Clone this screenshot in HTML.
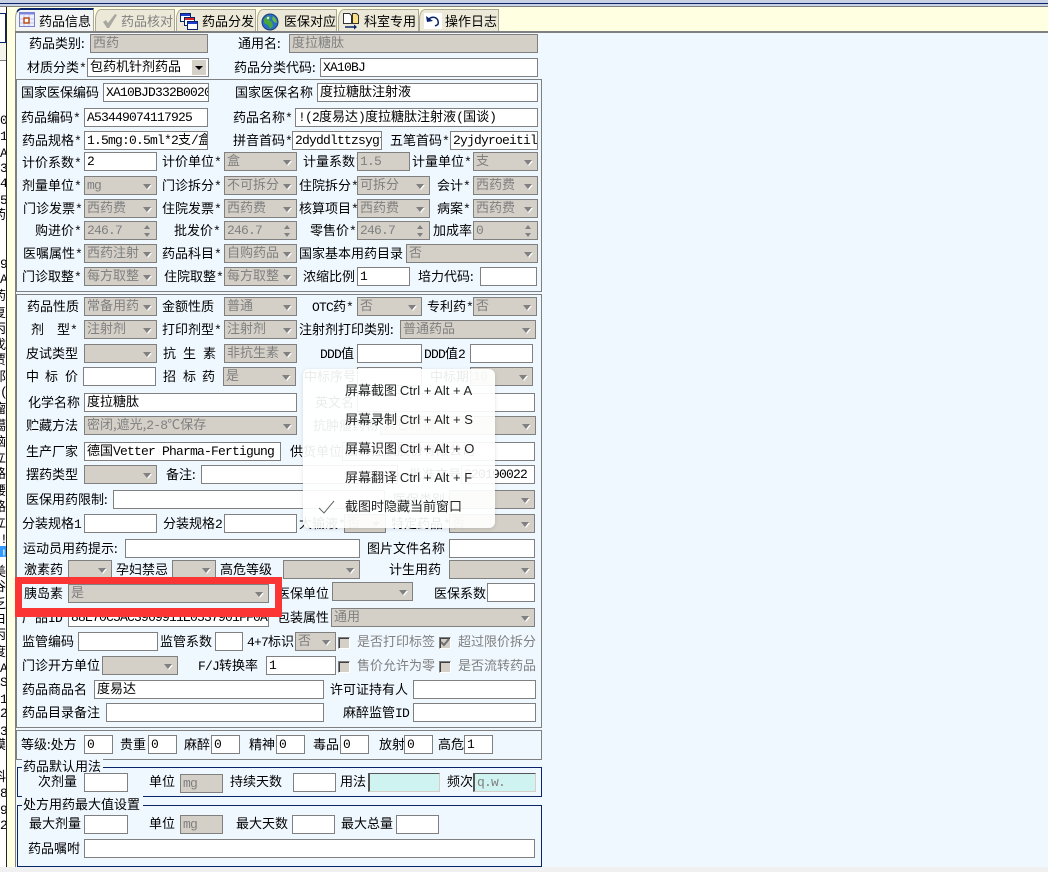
<!DOCTYPE html>
<html lang="zh"><head><meta charset="utf-8"><title>药品信息</title>
<style>
html,body{margin:0;padding:0;width:1048px;height:872px;overflow:hidden;background:#f0f0f0;font:13px/19px "WenQuanYi Zen Hei","Noto Sans CJK SC",sans-serif;color:#000}
div,p,b,i,em{position:absolute;box-sizing:border-box;margin:0;font-weight:normal;font-style:normal;white-space:nowrap}
s{font-family:"Liberation Mono",monospace;font-size:13px;letter-spacing:-.8px;line-height:1;text-decoration:none}
.r{left:0;width:545px;height:19px}
.r b{top:-1px}
.r.u b{top:-2px}
.r i{top:0;height:19px;border:1px solid #808080;background:#fff;padding-left:2px;line-height:14px;overflow:hidden}
i.d,i.s,i.n{background:#d4d0c8!important;color:#808080}
i.s::after{content:"";position:absolute;right:5px;top:7px;border:4.5px solid transparent;border-top:5px solid #808080;border-bottom:0;filter:drop-shadow(1px 1px 0 #fff)}
i.n::before{content:"";position:absolute;right:6px;top:3px;border:3px solid transparent;border-bottom:4px solid #808080;border-top:0}
i.n::after{content:"";position:absolute;right:6px;top:11px;border:3px solid transparent;border-top:4px solid #808080;border-bottom:0}
.r i.c{top:5px;width:12px;height:12px;padding:0;border:1px solid;border-color:#808080 #fff #fff #808080;background:#d4d0c8;box-shadow:inset 1px 1px 0 #404040}
.g{color:#808080}
.frame{border:1px solid #808080;left:16px;width:526px}
.fs{border:1px solid #0a246a;left:17px;width:525px}
.tab{top:9px;height:22px;background:#ece9d8;border:1px solid #aca899;border-bottom:0;border-top-left-radius:6px 10px;line-height:21px}
.tab b{left:23px;top:0;line-height:21px}
.tab svg{position:absolute;left:3px;top:3px}
.lf b{left:0;line-height:15px;font-size:13px}
.pm b{left:42px;line-height:18px;color:#222}
</style></head><body>

<!-- top bar -->
<div style="left:0;top:0;width:1048px;height:3px;background:#c9d2e4"></div>
<div style="left:0;top:3px;width:1048px;height:1px;background:#0a246a"></div>
<div style="left:0;top:4px;width:1048px;height:2px;background:#c9d2e4"></div>
<div style="left:0;top:6px;width:1048px;height:1px;background:#808080"></div>
<div style="left:7px;top:7px;width:1041px;height:24px;background:#ffffe1"></div>
<div style="left:7px;top:31px;width:8px;height:836px;background:#ffffe1"></div>

<!-- left strip -->
<div style="left:0;top:7px;width:6px;height:860px;background:#fff"></div>
<div style="left:6px;top:7px;width:1px;height:860px;background:#222"></div>
<div style="left:0;top:43px;width:6px;height:17px;background:#f4f4ea"></div>
<div style="left:0;top:13px;width:6px;height:30px;border:1px solid #0a246a;border-left:0"></div>
<div style="left:0;top:60px;width:6px;height:1px;background:#808080"></div>
<div style="left:0;top:546px;width:6px;height:11px;background:#3399ff"></div>
<div class="lf" style="left:0;top:0;width:6px;height:867px;overflow:hidden">
<b style="top:111px"><s>0</s></b><b style="top:127px"><s>1</s></b><b style="top:144px"><s>A</s></b><b style="top:159px"><s>3</s></b><b style="top:174px"><s>4</s></b><b style="top:191px"><s>5</s></b><b style="top:206px;left:-7px">药</b><b style="top:255px"><s>9</s></b><b style="top:270px"><s>A</s></b><b style="top:287px;left:-7px">药</b><b style="top:304px;left:-7px">复</b><b style="top:320px;left:-7px">丙</b><b style="top:336px;left:-7px">戊</b><b style="top:351px;left:-7px">贾</b><b style="top:368px;left:-7px">那</b><b style="top:383px"><s>(</s></b><b style="top:400px;left:-7px">瘤</b><b style="top:417px;left:-7px">噶</b><b style="top:433px;left:-7px">脑</b><b style="top:449px;left:-7px">立</b><b style="top:465px;left:-7px">路</b><b style="top:482px;left:-7px">腰</b><b style="top:498px;left:-7px">路</b><b style="top:514px;left:-7px">立</b><b style="top:530px"><s>!</s></b><b style="top:545px;color:#fff"><s>!</s></b><b style="top:563px;left:-7px">美</b><b style="top:578px;left:-7px">谷</b><b style="top:595px;left:-7px">乏</b><b style="top:610px;left:-7px">白</b><b style="top:626px;left:-7px">丙</b><b style="top:643px;left:-7px">度</b><b style="top:659px"><s>A</s></b><b style="top:673px"><s>S</s></b><b style="top:690px"><s> 1</s></b><b style="top:704px"><s> 2</s></b><b style="top:722px"><s> 3</s></b><b style="top:736px;left:-7px">摸</b><b style="top:768px;left:-7px">科</b><b style="top:784px"><s> 8</s></b><b style="top:801px"><s> 9</s></b><b style="top:816px"><s>20</s></b>
</div>

<!-- tabs -->
<div class="tab" style="left:15px;top:8px;height:24px;width:79px;background:#f3f5f5;border-top:2px solid #0a246a;z-index:2"><b>药品信息</b>
<svg width="17" height="16" viewBox="0 0 17 16" style="left:3px;top:2px"><rect x=".5" y=".5" width="15" height="14" fill="#eef0fd" stroke="#7a80d0"/><rect x=".5" y=".5" width="15" height="2" fill="#7c86dc"/><path d="M5 3v11M10 3v11M1 7h14M1 11h14" stroke="#c2c6f2"/><rect x="5" y="6" width="5" height="5" fill="#fff" stroke="#b8420c" stroke-width="1.4"/></svg></div>
<div class="tab" style="left:95px;width:80px"><b class="g" style="left:25px">药品核对</b>
<svg width="18" height="16" viewBox="0 0 18 16" style="left:5px"><path d="M2 9l3-2 2 3 7-9 2 1-8 13H6z" fill="#a8a8a0"/></svg></div>
<div class="tab" style="left:176px;width:80px"><b style="left:25px">药品分发</b>
<svg width="18" height="17" viewBox="0 0 18 17"><rect x=".5" y=".5" width="10" height="8" fill="#fff" stroke="#0a246a"/><rect x="1" y="1" width="9" height="2" fill="#1c3fd0"/><rect x="4.5" y="4.5" width="10" height="8" fill="#fff" stroke="#0a246a"/><rect x="5" y="5" width="9" height="2" fill="#d22"/><rect x="7.5" y="8.5" width="10" height="8" fill="#fff" stroke="#0a246a"/><rect x="8" y="9" width="9" height="2" fill="#1c3fd0"/></svg></div>
<div class="tab" style="left:257px;width:80px"><b style="left:26px">医保对应</b>
<svg width="18" height="18" viewBox="0 0 18 18"><circle cx="9" cy="9" r="8" fill="#2a6fc8" stroke="#1c3c70"/><path d="M3 6l4-3 3 1-2 3 3 2 1 4-3 3-2-4-4-2z" fill="#4aa83a"/><path d="M12 3l3 3 1 4-3-1-2-3z" fill="#6cbb44"/><circle cx="7" cy="5" r="1.2" fill="#cfe8ff"/></svg></div>
<div class="tab" style="left:338px;width:81px"><b style="left:25px">科室专用</b>
<svg width="18" height="17" viewBox="0 0 18 17"><path d="M1.5.5h6l2 2v8h-8z" fill="#fff" stroke="#333"/><path d="M10.5.5h4l2 2v8h-6z" fill="#ffe080" stroke="#333"/><path d="M3 14h10" stroke="#0a246a" stroke-width="1.5"/><path d="M12 11.5l3 2.5-3 2.5z" fill="#0a246a"/></svg></div>
<div class="tab" style="left:419px;width:80px"><b style="left:25px">操作日志</b>
<svg width="18" height="16" viewBox="0 0 18 16" style="left:4px"><rect width="18" height="16" fill="#fff"/><path d="M5 6c3-3 8-2 9 2s-1 4-3 5" fill="none" stroke="#0a246a" stroke-width="1.5"/><path d="M2 3l1 6 6-1z" fill="#0a246a"/></svg></div>

<!-- page -->
<div style="left:15px;top:31px;width:1033px;height:2px;background:#808080;z-index:3"></div>
<div style="left:15px;top:31px;width:1px;height:836px;background:#808080"></div>
<div style="left:16px;top:33px;width:1032px;height:834px;background:#f0f8ff"></div>
<div class="frame" style="top:79px;height:213px"></div>
<div class="frame" style="top:294px;height:434px"></div>
<div class="frame" style="top:730px;height:30px"></div>
<div class="fs" style="top:767px;height:30px"></div>
<div class="fs" style="top:805px;height:62px"></div>

<p class="r" style="top:34px"><b style="left:29px">药品类别:</b><i class="d" style="left:90px;width:118px">西药</i><b style="left:238px">通用名:</b><i class="d" style="left:289px;width:249px">度拉糖肽</i></p>
<p class="r" style="top:58px"><b style="left:27px">材质分类<s>*</s></b><i style="left:87px;width:122px">包药机针剂药品<em style="right:2px;top:1px;width:14px;height:15px;background:#d4d0c8"><em style="left:3px;top:6px;border:4px solid transparent;border-top:4px solid #000;border-bottom:0"></em></em></i><b style="left:234px">药品分类代码:</b><i style="left:320px;width:218px"><s>XA10BJ</s></i></p>

<p class="r" style="top:83px"><b style="left:21px">国家医保编码</b><i style="left:103px;width:106px"><s>XA10BJD332B0020</s></i><b style="left:235px">国家医保名称</b><i style="left:317px;width:221px">度拉糖肽注射液</i></p>
<p class="r" style="top:108px"><b style="left:21px">药品编码<s>*</s></b><i style="left:84px;width:124px"><s>A53449074117925</s></i><b style="left:233px">药品名称<s>*</s></b><i style="left:295px;width:243px"><s>!(2</s>度易达<s>)</s>度拉糖肽注射液<s>(</s>国谈<s>)</s></i></p>
<p class="r" style="top:131px"><b style="left:22px">药品规格<s>*</s></b><i style="left:84px;width:124px"><s>1.5mg:0.5ml*2</s>支<s>/</s>盒</i><b style="left:233px">拼音首码<s>*</s></b><i style="left:292px;width:90px"><s>2dyddlttzsygt</s></i><b style="left:390px">五笔首码<s>*</s></b><i style="left:450px;width:88px"><s>2yjdyroeitil</s></i></p>

<p class="r" style="top:152px"><b style="left:22px;top:0">计价系数<s>*</s></b><i style="left:84px;width:73px"><s>2</s></i><b style="left:162px">计价单位<s>*</s></b><i class="s" style="left:224px;width:73px">盒</i><b style="left:303px">计量系数<s>*</s></b><i class="d" style="left:357px;width:53px"><s>1.5</s></i><b style="left:412px">计量单位<s>*</s></b><i class="s" style="left:473px;width:65px">支</i></p>
<p class="r" style="top:176px"><b style="left:22px">剂量单位<s>*</s></b><i class="s" style="left:84px;width:73px"><s>mg</s></i><b style="left:162px">门诊拆分<s>*</s></b><i class="s" style="left:224px;width:73px">不可拆分</i><b style="left:299px">住院拆分<s>*</s></b><i class="s" style="left:357px;width:73px">可拆分</i><b style="left:437px">会计<s>*</s></b><i class="s" style="left:473px;width:65px">西药费</i></p>
<p class="r" style="top:199px"><b style="left:23px">门诊发票<s>*</s></b><i class="s" style="left:84px;width:73px">西药费</i><b style="left:162px">住院发票<s>*</s></b><i class="s" style="left:224px;width:73px">西药费</i><b style="left:299px">核算项目<s>*</s></b><i class="s" style="left:357px;width:73px">西药费</i><b style="left:437px">病案<s>*</s></b><i class="s" style="left:473px;width:65px">西药费</i></p>
<p class="r" style="top:221px"><b style="left:35px">购进价<s>*</s></b><i class="n" style="left:84px;width:73px"><s>246.7</s></i><b style="left:174px">批发价<s>*</s></b><i class="n" style="left:224px;width:73px"><s>246.7</s></i><b style="left:310px">零售价<s>*</s></b><i class="n" style="left:357px;width:73px"><s>246.7</s></i><b style="left:433px">加成率</b><i class="n" style="left:473px;width:65px"><s>0</s></i></p>
<p class="r" style="top:244px"><b style="left:23px">医嘱属性<s>*</s></b><i class="s" style="left:84px;width:73px">西药注射</i><b style="left:162px">药品科目<s>*</s></b><i class="s" style="left:224px;width:73px">自购药品</i><b style="left:299px">国家基本用药目录</b><i class="s" style="left:406px;width:132px">否</i></p>
<p class="r" style="top:267px"><b style="left:22px">门诊取整<s>*</s></b><i class="s" style="left:84px;width:73px">每方取整</i><b style="left:164px">住院取整<s>*</s></b><i class="s" style="left:224px;width:73px">每方取整</i><b style="left:303px">浓缩比例</b><i style="left:357px;width:53px"><s>1</s></i><b style="left:418px">培力代码:</b><i style="left:480px;width:57px"></i></p>

<p class="r" style="top:297px"><b style="left:27px">药品性质</b><i class="s" style="left:84px;width:73px">常备用药</i><b style="left:162px">金额性质</b><i class="s" style="left:224px;width:73px">普通</i><b style="left:312px"><s>OTC</s>药<s>*</s></b><i class="s" style="left:357px;width:65px">否</i><b style="left:427px">专利药<s>*</s></b><i class="s" style="left:473px;width:64px">否</i></p>
<p class="r" style="top:320px"><b style="left:31px">剂</b><b style="left:57px">型<s>*</s></b><i class="s" style="left:84px;width:73px">注射剂</i><b style="left:162px">打印剂型<s>*</s></b><i class="s" style="left:224px;width:73px">注射剂</i><b style="left:299px">注射剂打印类别:</b><i class="s" style="left:400px;width:136px">普通药品</i></p>
<p class="r" style="top:344px"><b style="left:26px">皮试类型</b><i class="s" style="left:84px;width:73px"></i><b style="left:163px">抗</b><b style="left:183px">生</b><b style="left:203px">素</b><i class="s" style="left:224px;width:73px">非抗生素</i><b style="left:320px"><s>DDD</s>值</b><i style="left:357px;width:65px"></i><b style="left:424px"><s>DDD</s>值<s>2</s></b><i style="left:470px;width:63px"></i></p>
<p class="r" style="top:367px"><b style="left:26px">中</b><b style="left:45px">标</b><b style="left:65px">价</b><i style="left:83px;width:73px"></i><b style="left:163px">招</b><b style="left:183px">标</b><b style="left:202px">药</b><i class="s" style="left:223px;width:73px">是</i><b style="left:304px">中标序号</b><i style="left:357px;width:65px"></i><b style="left:430px">中标期</b><i class="s" style="left:470px;width:63px"><s>10</s></i></p>
<p class="r" style="top:393px"><b style="left:28px">化学名称</b><i style="left:84px;width:213px">度拉糖肽</i><b style="left:315px">英文名</b><i style="left:357px;width:178px"></i></p>
<p class="r" style="top:416px"><b style="left:26px">贮藏方法</b><i class="s" style="left:84px;width:213px">密闭,遮光,<s>2-8</s>℃保存</i><b style="left:313px">抗肿瘤药物</b><i class="s" style="left:380px;width:156px">其它药物</i></p>
<p class="r" style="top:442px"><b style="left:26px">生产厂家</b><i style="left:84px;width:197px">德国<s>Vetter Pharma-Fertigung GmbH</s></i><b style="left:290px">供货单位</b><i style="left:342px;width:193px">国药控股股份有限公司</i></p>
<p class="r" style="top:465px"><b style="left:26px">摆药类型</b><i class="s" style="left:84px;width:73px"></i><b style="left:166px">备注:</b><i style="left:201px;width:197px"></i><b style="left:409px">批准文号</b><i style="left:461px;width:74px"><s>S20190022</s></i></p>
<p class="r" style="top:490px"><b style="left:26px">医保用药限制:</b><i style="left:113px;width:272px"></i><b style="left:393px">医保类别</b><i class="s" style="left:449px;width:86px"></i></p>
<p class="r" style="top:514px"><b style="left:22px">分装规格<s>1</s></b><i style="left:84px;width:73px"></i><b style="left:163px">分装规格<s>2</s></b><i style="left:224px;width:73px"></i><b style="left:299px">大输液<s>*</s></b><i class="s" style="left:344px;width:42px">否</i><b style="left:391px">特定药品<s>*</s></b><i class="s" style="left:449px;width:86px">否</i></p>
<p class="r" style="top:539px"><b style="left:23px">运动员用药提示:</b><i style="left:125px;width:235px"></i><b style="left:367px">图片文件名称</b><i style="left:449px;width:86px"></i></p>
<p class="r" style="top:560px"><b style="left:24px">激素药</b><i class="s" style="left:68px;width:44px"></i><b style="left:116px">孕妇禁忌</b><i class="s" style="left:172px;width:44px"></i><b style="left:220px">高危等级</b><i class="s" style="left:283px;width:77px"></i><b style="left:389px">计生用药</b><i class="s" style="left:449px;width:86px"></i></p>
<p class="r" style="top:584px"><b style="left:24px">胰岛素</b><i class="s" style="left:68px;width:201px">是</i><b style="left:277px">医保单位</b><i class="s" style="left:332px;width:81px;top:-2px">&nbsp;</i><b style="left:434px">医保系数</b><i style="left:487px;width:48px;top:-1px"></i></p>
<p class="r" style="top:608px"><b style="left:22px">产品<s>ID</s></b><i style="left:68px;width:201px"><s>88E70C5AC3969911E0537901FF0A0</s></i><b style="left:277px">包装属性</b><i class="s" style="left:331px;width:204px">通用</i></p>
<p class="r" style="top:632px"><b style="left:22px">监管编码</b><i style="left:78px;width:80px"></i><b style="left:160px">监管系数</b><i style="left:215px;width:28px"></i><b style="left:247px"><s>4+7</s>标识</b><i class="s" style="left:295px;width:41px">否</i><i class="c" style="left:338px"></i><b class="g" style="left:357px">是否打印标签</b><i class="c" style="left:439px"><svg width="10" height="10" style="position:absolute;left:0;top:0"><path d="M1 4l3 3 5-6" fill="none" stroke="#707070" stroke-width="2"/></svg></i><b class="g" style="left:458px">超过限价拆分</b></p>
<p class="r" style="top:656px"><b style="left:22px">门诊开方单位</b><i class="s" style="left:102px;width:76px"></i><b style="left:198px"><s>F/J</s>转换率</b><i style="left:266px;width:70px"><s>1</s></i><i class="c" style="left:338px"></i><b class="g" style="left:357px">售价允许为零</b><i class="c" style="left:439px"></i><b class="g" style="left:458px">是否流转药品</b></p>
<p class="r" style="top:680px"><b style="left:22px">药品商品名</b><i style="left:94px;width:230px">度易达</i><b style="left:330px">许可证持有人</b><i style="left:413px;width:123px"></i></p>
<p class="r" style="top:703px"><b style="left:22px">药品目录备注</b><i style="left:106px;width:218px"></i><b style="left:343px">麻醉监管<s>ID</s></b><i style="left:413px;width:123px"></i></p>

<p class="r" style="top:735px"><b style="left:21px">等级:处方</b><i style="left:84px;width:29px"><s>0</s></i><b style="left:120px">贵重</b><i style="left:148px;width:29px"><s>0</s></i><b style="left:184px">麻醉</b><i style="left:211px;width:29px"><s>0</s></i><b style="left:249px">精神</b><i style="left:276px;width:29px"><s>0</s></i><b style="left:313px">毒品</b><i style="left:340px;width:29px"><s>0</s></i><b style="left:379px">放射</b><i style="left:404px;width:29px"><s>0</s></i><b style="left:438px">高危</b><i style="left:464px;width:29px"><s>1</s></i></p>

<b style="left:22px;top:757px;padding:0 2px 0 1px;line-height:18px;background:#f0f8ff">药品默认用法</b>
<p class="r u" style="top:773px"><b style="left:38px">次剂量</b><i style="left:84px;width:44px"></i><b style="left:149px">单位</b><i class="d" style="left:180px;width:43px;top:1px"><s>mg</s></i><b style="left:230px">持续天数</b><i style="left:293px;width:43px"></i><b style="left:340px">用法</b><i style="left:368px;width:72px;background:#cff3f1;border-color:#555 #d4d0c8 #d4d0c8 #555;border-width:1px 1px 1px 2px"></i><b style="left:447px">频次</b><i style="left:473px;width:63px;background:#cff3f1;color:#808080;border-color:#555 #d4d0c8 #d4d0c8 #555;border-width:1px 1px 1px 2px"><s>q.w.</s></i></p>

<b style="left:22px;top:795px;padding:0 3px 0 1px;line-height:18px;background:#f0f8ff">处方用药最大值设置</b>
<p class="r u" style="top:815px"><b style="left:29px">最大剂量</b><i style="left:84px;width:44px"></i><b style="left:149px">单位</b><i class="d" style="left:180px;width:43px"><s>mg</s></i><b style="left:236px">最大天数</b><i style="left:292px;width:43px"></i><b style="left:341px">最大总量</b><i style="left:396px;width:43px"></i></p>
<p class="r" style="top:839px"><b style="left:28px">药品嘱咐</b><i style="left:84px;width:451px"></i></p>

<!-- red highlight -->
<div style="left:15px;top:577px;width:267px;height:40px;border:solid #fb3434;border-width:7px 7px 9px 7px"></div>

<!-- popup menu -->
<div class="pm" style="left:303px;top:369px;width:192px;height:159px;background:rgba(255,255,255,.92);border-radius:6px;box-shadow:0 1px 4px rgba(0,0,0,.12)">
<b style="top:12px">屏幕截图 <span style="font-family:'Liberation Sans'">Ctrl + Alt + A</span></b>
<b style="top:41px">屏幕录制 <span style="font-family:'Liberation Sans'">Ctrl + Alt + S</span></b>
<b style="top:70px">屏幕识图 <span style="font-family:'Liberation Sans'">Ctrl + Alt + O</span></b>
<b style="top:99px">屏幕翻译 <span style="font-family:'Liberation Sans'">Ctrl + Alt + F</span></b>
<b style="top:128px">截图时隐藏当前窗口</b>
<svg width="18" height="14" viewBox="0 0 18 14" style="position:absolute;left:15px;top:131px"><path d="M1 8l5 5L16 1" fill="none" stroke="#666" stroke-width="1"/></svg>
</div>
</body></html>
